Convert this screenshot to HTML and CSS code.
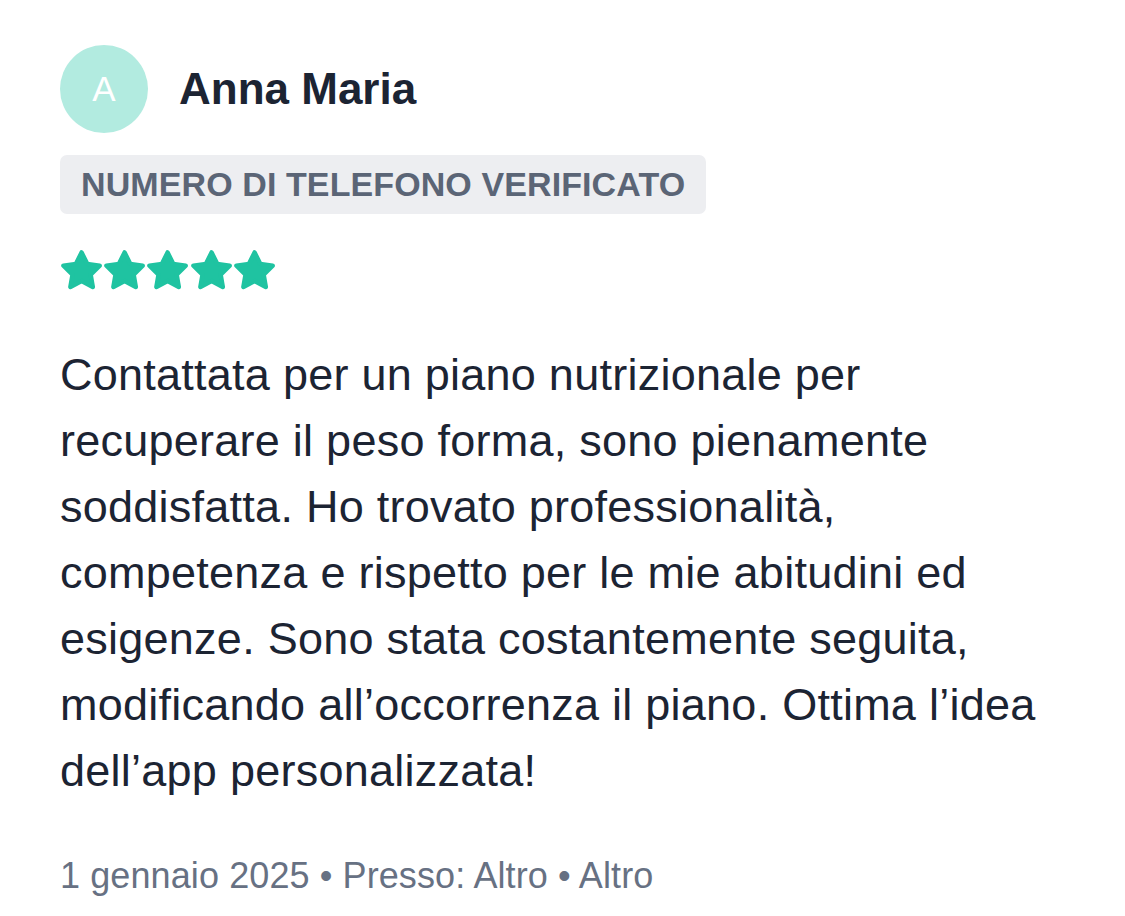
FILE: index.html
```html
<!DOCTYPE html>
<html lang="it">
<head>
<meta charset="utf-8">
<title>Recensione</title>
<link rel="stylesheet" href="styles.css">
</head>
<body>
<article class="review">
  <header class="review-head">
    <div class="avatar">A</div>
    <div class="name">Anna Maria</div>
  </header>
  <div class="badge">NUMERO DI TELEFONO VERIFICATO</div>
  <div class="stars" aria-label="5 stelle">
    <svg class="star" viewBox="1.4 1.6 21.2 21.2"><path d="M12 2.8l2.75 5.6 6.15.9-4.45 4.35 1.05 6.1L12 16.85l-5.5 2.9 1.05-6.1L3.1 9.3l6.15-.9z"/></svg>
    <svg class="star" viewBox="1.4 1.6 21.2 21.2"><path d="M12 2.8l2.75 5.6 6.15.9-4.45 4.35 1.05 6.1L12 16.85l-5.5 2.9 1.05-6.1L3.1 9.3l6.15-.9z"/></svg>
    <svg class="star" viewBox="1.4 1.6 21.2 21.2"><path d="M12 2.8l2.75 5.6 6.15.9-4.45 4.35 1.05 6.1L12 16.85l-5.5 2.9 1.05-6.1L3.1 9.3l6.15-.9z"/></svg>
    <svg class="star" viewBox="1.4 1.6 21.2 21.2"><path d="M12 2.8l2.75 5.6 6.15.9-4.45 4.35 1.05 6.1L12 16.85l-5.5 2.9 1.05-6.1L3.1 9.3l6.15-.9z"/></svg>
    <svg class="star" viewBox="1.4 1.6 21.2 21.2"><path d="M12 2.8l2.75 5.6 6.15.9-4.45 4.35 1.05 6.1L12 16.85l-5.5 2.9 1.05-6.1L3.1 9.3l6.15-.9z"/></svg>
  </div>
  <p class="body">Contattata per un piano nutrizionale per recuperare il peso forma, sono pienamente soddisfatta. Ho trovato professionalità, competenza e rispetto per le mie abitudini ed esigenze. Sono stata costantemente seguita, modificando all’occorrenza il piano. Ottima l’idea dell’app personalizzata!</p>
  <p class="meta">1 gennaio 2025 • Presso: Altro • Altro</p>
</article>
</body>
</html>
```
FILE: styles.css
```css
html, body {
  margin: 0;
  padding: 0;
  background: #ffffff;
}
body {
  font-family: "Liberation Sans", Arial, sans-serif;
  color: #1c2433;
}
.review {
  padding: 45px 0 0 60px;
  width: 1000px;
  display: flex;
  flex-direction: column;
  align-items: flex-start;
}
.review-head {
  display: flex;
  align-items: center;
  gap: 31px;
}
.avatar {
  width: 88px;
  height: 88px;
  border-radius: 50%;
  background: #b2ebe0;
  color: #ffffff;
  font-size: 35px;
  display: flex;
  align-items: center;
  justify-content: center;
}
.name {
  font-size: 44px;
  font-weight: 700;
  color: #1c2433;
}
.badge {
  margin-top: 22px;
  background: #edeef1;
  border-radius: 7px;
  padding: 0 21px 0 21px;
  height: 59px;
  line-height: 59px;
  font-size: 34px;
  font-weight: 700;
  letter-spacing: 0.1px;
  color: #5b6576;
}
.stars {
  margin-top: 36px;
  display: flex;
  gap: 0;
}
.star {
  width: 43.2px;
  height: 43.2px;
  display: block;
}
.star path {
  fill: #1fc3a1;
  stroke: #1fc3a1;
  stroke-width: 2.2;
  stroke-linejoin: round;
}
.body {
  margin: 49px 0 0 0;
  font-size: 45px;
  line-height: 66px;
  letter-spacing: 0.25px;
  color: #1c2433;
}
.meta {
  margin: 52px 0 0 0;
  font-size: 36px;
  line-height: 40px;
  letter-spacing: 0.1px;
  color: #677183;
}
```
